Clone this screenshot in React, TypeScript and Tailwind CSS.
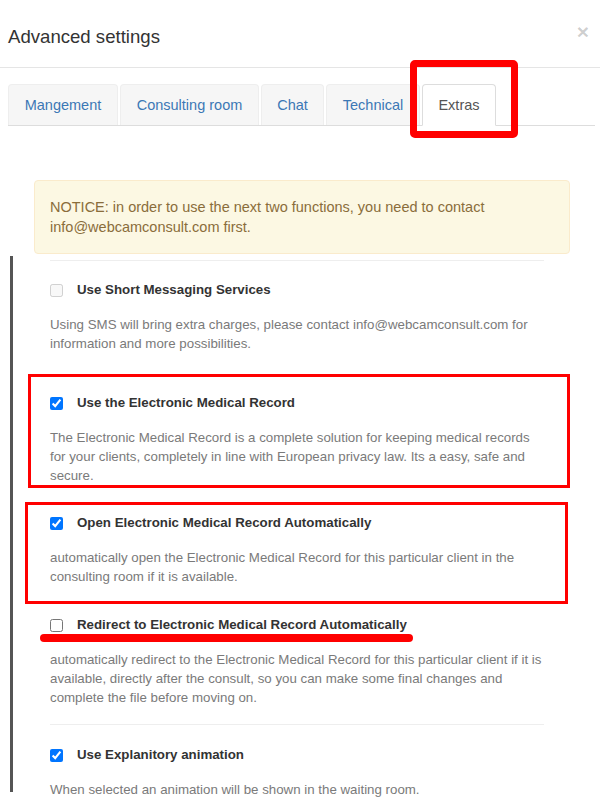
import React from "react";

type Item = {
  label: string;
  lines: string[];
  checked: boolean;
  disabled?: boolean;
};

const tabs = [
  { name: "Mangement", w: "w-[110px]" },
  { name: "Consulting room", w: "w-[139px]" },
  { name: "Chat", w: "w-[63px]" },
  { name: "Technical", w: "w-[94px]" },
  { name: "Extras", w: "w-[74px]" },
];

const Row = ({ item }: { item: Item }) => (
  <div>
    <div className="flex items-center h-[20px]">
      <input
        type="checkbox"
        defaultChecked={item.checked}
        disabled={item.disabled}
        className="w-[13px] h-[13px] m-0 shrink-0 accent-[#0075ff]"
      />
      <span className="ml-[14px] text-[13.3px] font-bold text-[#333]">{item.label}</span>
    </div>
    <p className="mt-[15px] text-[13.3px] leading-[19px] text-[#7a7a7a]">
      {item.lines.map((l, i) => (
        <span key={i} className="block whitespace-nowrap">{l}</span>
      ))}
    </p>
  </div>
);

export default function App() {
  return (
    <div className="w-[600px] h-[800px] overflow-hidden bg-white font-['Liberation_Sans',Arial,sans-serif]">
      {/* header */}
      <div className="flex justify-between items-start h-[68px] px-2 border-b border-[#e5e5e5]">
        <h4 className="pt-[26px] text-[18.6px] leading-[22px] text-[#333]">Advanced settings</h4>
        <button className="mt-[20px] mr-[3px] text-[21px] font-bold leading-[24px] text-black/20">×</button>
      </div>

      {/* tabs */}
      <div className="px-2 mt-[16px]">
        <ul className="flex border-b border-[#ddd] w-[587px]">
          {tabs.map((t) =>
            t.name === "Extras" ? (
              <li key={t.name} className={`relative -mb-px mr-[2px] ${t.w}`}>
                <span className="block text-center py-[10px] text-[14.5px] leading-[20px] text-[#555] bg-white border border-[#ddd] border-b-transparent rounded-t-[4px]">
                  {t.name}
                </span>
                <div className="absolute left-[-12px] top-[-24px] w-[108px] h-[78px] border-[7px] border-[#f00] rounded-[5px]" />
              </li>
            ) : (
              <li key={t.name} className={`mr-[2px] ${t.w}`}>
                <span className="block text-center py-[10px] text-[14.5px] leading-[20px] text-[#3c78b5] bg-[#f6f6f6] border border-[#eeeeee] border-b-0 rounded-t-[4px]">
                  {t.name}
                </span>
              </li>
            )
          )}
        </ul>
      </div>

      {/* notice */}
      <div className="mt-[54px] ml-[34px] w-[536px] px-[15px] py-[16px] bg-[#fcf8e3] border border-[#faebcc] rounded-[4px] text-[14.5px] leading-[20px] text-[#8a6d3b]">
        NOTICE: in order to use the next two functions, you need to contact
        <br />
        info@webcamconsult.com first.
      </div>

      {/* settings */}
      <div className="flex mt-[2px]">
        <div className="ml-[10px] w-[3px] h-[536px] bg-[#555] shrink-0" />
        <div className="ml-[37px] w-[494px] pt-[4px]">
          <div className="border-t border-[#eee]" />

          <div className="mt-[19px]">
            <Row
              item={{
                label: "Use Short Messaging Services",
                checked: false,
                disabled: true,
                lines: [
                  "Using SMS will bring extra charges, please contact info@webcamconsult.com for",
                  "information and more possibilities.",
                ],
              }}
            />
          </div>

          <div className="relative mt-[40px]">
            <Row
              item={{
                label: "Use the Electronic Medical Record",
                checked: true,
                lines: [
                  "The Electronic Medical Record is a complete solution for keeping medical records",
                  "for your clients, completely in line with European privacy law. Its a easy, safe and",
                  "secure.",
                ],
              }}
            />
            <div className="absolute left-[-22px] right-[-26px] top-[-19px] bottom-[-3px] border-[3px] border-[#f00]" />
          </div>

          <div className="relative mt-[28px]">
            <Row
              item={{
                label: "Open Electronic Medical Record Automatically",
                checked: true,
                lines: [
                  "automatically open the Electronic Medical Record for this particular client in the",
                  "consulting room if it is available.",
                ],
              }}
            />
            <div className="absolute left-[-25px] right-[-24px] top-[-11px] bottom-[-18px] border-[3px] border-[#f00]" />
          </div>

          <div className="relative mt-[29px]">
            <Row
              item={{
                label: "Redirect to Electronic Medical Record Automatically",
                checked: false,
                lines: [
                  "automatically redirect to the Electronic Medical Record for this particular client if it is",
                  "available, directly after the consult, so you can make some final changes and",
                  "complete the file before moving on.",
                ],
              }}
            />
            <div className="absolute left-[-10px] top-[19px] w-[373px] h-[8px] rounded-full bg-[#f00]" />
          </div>

          <div className="mt-[17px] border-t border-[#eee]" />

          <div className="mt-[20px]">
            <Row
              item={{
                label: "Use Explanitory animation",
                checked: true,
                lines: ["When selected an animation will be shown in the waiting room."],
              }}
            />
          </div>
        </div>
      </div>
    </div>
  );
}
